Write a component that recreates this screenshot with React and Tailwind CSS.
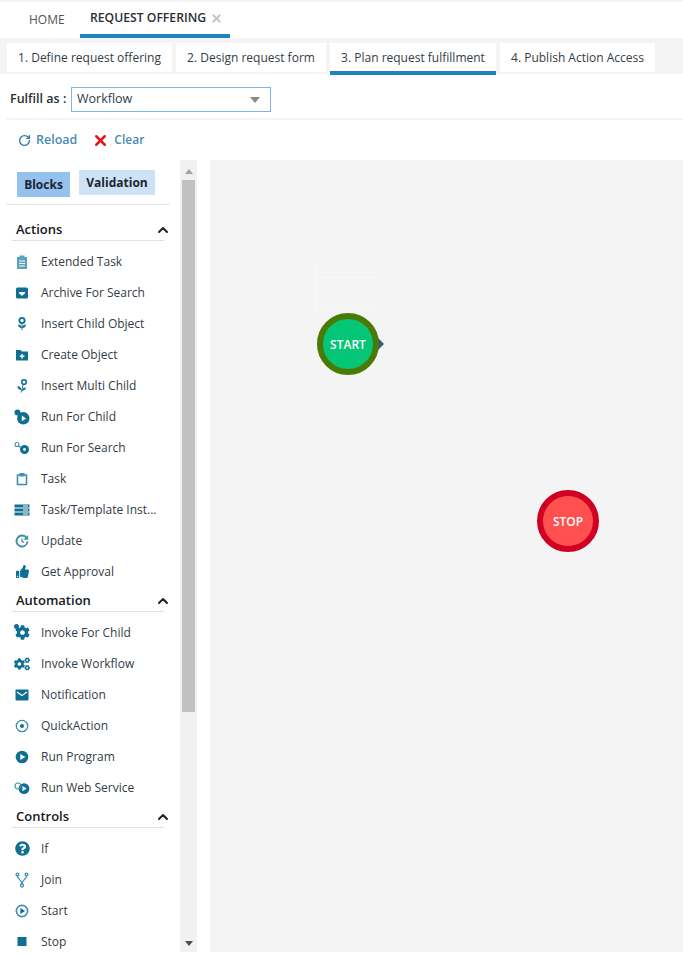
import { FaCog, FaCogs, FaQuestionCircle, FaThumbsUp } from 'react-icons/fa'
import { ChevronUp, RotateCw, X } from 'lucide-react'

const TEAL = '#0f6f92'
const SOFT = '#3f8fab'

function Svg({ children }) {
  return <svg width="16" height="16" viewBox="0 0 16 16" fill={TEAL}>{children}</svg>
}

const ExtendedTaskIcon = () => (
  <Svg>
    <path fill="#5aa3bb" d="M3 3h2.500V1.500h5V3H13v12H3z" />
    <path fill="#fff" d="M5 6.500h6v1H5zM5 9h6v1H5zM5 11.500h6v1H5z" />
  </Svg>
)
const ArchiveIcon = () => (
  <Svg>
    <rect x="2" y="2.500" width="12" height="11" rx="1.500" />
    <path fill="#fff" d="M5 7h6v1.200L8.600 10.500H7.400L5 8.200z" />
  </Svg>
)
const ChildIcon = () => (
  <Svg>
    <path fill="none" stroke={SOFT} strokeWidth="1.200" d="M8 7.500v6.500" />
    <path d="M4 8.500c1.800 0 3.600 1 4 3.500-2.300.2-3.800-1.200-4-3.500zM12 8.500c-1.800 0-3.600 1-4 3.500 2.300.2 3.800-1.200 4-3.500z" />
    <circle cx="8" cy="4.500" r="2.600" fill="none" stroke={TEAL} strokeWidth="1.800" />
  </Svg>
)
const FolderPlusIcon = () => (
  <Svg>
    <path d="M2 3h4.500L8 4.500h6v9H2z" />
    <path fill="#fff" d="M7.400 7h1.400v1.600h1.600V10H8.800v1.600H7.400V10H5.800V8.600h1.600z" />
  </Svg>
)
const MultiChildIcon = () => (
  <Svg>
    <path fill="none" stroke={SOFT} strokeWidth="1.200" d="M9 7l-1.800 7.500" />
    <path d="M3.500 8c1.900.2 3.500 1.400 3.800 4C5 12 3.600 10.500 3.500 8zM12 9.500c-.5 2.300-2.200 3.400-4.300 3.300.4-2.100 2.100-3.300 4.300-3.300z" />
    <circle cx="10" cy="4" r="2.300" fill="none" stroke={TEAL} strokeWidth="1.600" />
  </Svg>
)
const RunChildIcon = () => (
  <Svg>
    <circle cx="9.300" cy="9.300" r="6.200" />
    <circle cx="3.500" cy="3.500" r="3" />
    <path fill="#fff" d="M7.800 6.500l4.200 2.900-4.200 2.900z" />
  </Svg>
)
const RunSearchIcon = () => (
  <Svg>
    <circle cx="3" cy="4.500" r="2" fill="none" stroke={SOFT} strokeWidth="1.100" />
    <path stroke={SOFT} strokeWidth="1.100" d="M4.500 6l2 1.500" />
    <circle cx="10.500" cy="9.500" r="4.500" />
    <circle cx="10.500" cy="9.500" r="1.400" fill="#fff" />
  </Svg>
)
const TaskIcon = () => (
  <Svg>
    <path fill="none" stroke={SOFT} strokeWidth="1.600" d="M3.500 4h9v9.500h-9z" />
    <path fill={SOFT} d="M5.500 2h5v3.500h-5z" />
  </Svg>
)
const BarsIcon = () => (
  <Svg>
    <path d="M.5 2.500h15v3H.5zM.5 6.500h15v3H.5zM.5 10.500h15v3H.5z" />
    <path fill="#fff" d="M9 3.500h5v1H9zM9 7.500h5v1H9zM9 11.500h5v1H9z" />
  </Svg>
)
const UpdateIcon = () => (
  <Svg>
    <path fill="none" stroke={SOFT} strokeWidth="1.900" d="M12.600 5A5.500 5.500 0 1 0 13.500 8.500" />
    <path fill={SOFT} d="M14.200 2v4.800H9.400z" />
    <path fill="none" stroke={SOFT} strokeWidth="1.200" d="M8 5.500v3l2.200 1" />
  </Svg>
)
const MailIcon = () => (
  <Svg>
    <rect x="1.500" y="2.500" width="13" height="11" rx="1" />
    <path fill="none" stroke="#fff" strokeWidth="1.200" d="M3 5l5 3.500L13 5" />
  </Svg>
)
const QuickActionIcon = () => (
  <Svg>
    <circle cx="8" cy="8" r="5.700" fill="none" stroke={SOFT} strokeWidth="1.300" />
    <circle cx="8" cy="8" r="2" />
  </Svg>
)
const RunProgramIcon = () => (
  <Svg>
    <circle cx="8" cy="8" r="6.300" />
    <path fill="#fff" d="M6.300 5l5 3-5 3z" />
  </Svg>
)
const WebServiceIcon = () => (
  <Svg>
    <circle cx="10" cy="8.600" r="5.400" />
    <circle cx="4" cy="6" r="3" fill="none" stroke={SOFT} strokeWidth="1.200" />
    <path fill="#fff" d="M8.500 6l4 2.600-4 2.600z" />
  </Svg>
)
const JoinIcon = () => (
  <Svg>
    <g fill="none" stroke={SOFT} strokeWidth="1.300">
      <circle cx="3.500" cy="2.500" r="1.400" />
      <circle cx="12.500" cy="2.500" r="1.400" />
      <circle cx="8" cy="13.500" r="1.500" />
      <path d="M3.500 4c0 3 4.500 4 4.500 8M12.500 4c0 3-4.500 4-4.500 8" />
    </g>
  </Svg>
)
const StartIcon = () => (
  <Svg>
    <circle cx="8" cy="8" r="5.600" fill="none" stroke={SOFT} strokeWidth="1.600" />
    <path d="M6.300 5l4.800 3-4.800 3z" />
  </Svg>
)
const StopIcon = () => (
  <Svg>
    <rect x="3.500" y="3" width="9" height="9" />
  </Svg>
)
const GearIcon = () => (
  <span className="relative flex">
    <FaCog size={15} color={TEAL} />
    <span className="absolute -left-[1px] -top-[1px] h-[5px] w-[5px] rounded-full bg-[#0f6f92]" />
  </span>
)
const GearsIcon = () => <FaCogs size={16} color={TEAL} />
const HelpIcon = () => <FaQuestionCircle size={15} color={TEAL} />
const ThumbIcon = () => <FaThumbsUp size={13} color={TEAL} />

const sections = [
  {
    title: 'Actions',
    items: [
      ['Extended Task', ExtendedTaskIcon],
      ['Archive For Search', ArchiveIcon],
      ['Insert Child Object', ChildIcon],
      ['Create Object', FolderPlusIcon],
      ['Insert Multi Child', MultiChildIcon],
      ['Run For Child', RunChildIcon],
      ['Run For Search', RunSearchIcon],
      ['Task', TaskIcon],
      ['Task/Template Inst...', BarsIcon],
      ['Update', UpdateIcon],
      ['Get Approval', ThumbIcon],
    ],
  },
  {
    title: 'Automation',
    items: [
      ['Invoke For Child', GearIcon],
      ['Invoke Workflow', GearsIcon],
      ['Notification', MailIcon],
      ['QuickAction', QuickActionIcon],
      ['Run Program', RunProgramIcon],
      ['Run Web Service', WebServiceIcon],
    ],
  },
  {
    title: 'Controls',
    items: [
      ['If', HelpIcon],
      ['Join', JoinIcon],
      ['Start', StartIcon],
      ['Stop', StopIcon],
    ],
  },
]

const steps = [
  ['1. Define request offering', 'w-[165px]'],
  ['2. Design request form', 'w-[150px]'],
  ['3. Plan request fulfillment', 'w-[166px]'],
  ['4. Publish Action Access', 'w-[155px]'],
]

export default function App() {
  return (
    <div className="h-[956px] w-[683px] overflow-hidden bg-white font-['Open_Sans',sans-serif] text-[12px] text-[#333c46]">
      {/* Top tabs */}
      <div className="flex h-[38px] border-t-2 border-[#f4f4f4] bg-white">
        <div className="flex w-[80px] items-center pb-[1px] pl-[29px] text-[#555]">HOME</div>
        <div className="flex w-[150px] items-center gap-[4px] border-b-4 border-[#2084bc] pl-[10px] pt-[1px] text-[12.2px] font-semibold text-[#2a2f36]">
          REQUEST OFFERING
          <X size={13} strokeWidth={3.5} className="text-[#c4c4c4]" />
        </div>
      </div>

      {/* Steps */}
      <div className="flex h-[36px] gap-[4px] bg-[#f4f4f4] pl-[7px] pt-[5px]">
        {steps.map(([label, width], i) => (
          <div
            key={label}
            className={`flex ${width} items-start justify-center bg-white pt-[6px] ${i === 2 ? 'h-[32px] border-b-4 border-[#2084bc]' : 'h-[29px]'}`}
          >
            {label}
          </div>
        ))}
      </div>

      {/* Fulfill as */}
      <div className="flex h-[44px] items-center pl-[10px] pt-[6px]">
        <span className="w-[61px] text-[12.5px] font-semibold text-[#2a2f36]">Fulfill as :</span>
        <div className="flex h-[25px] w-[200px] items-center justify-between border border-[#7db4ea] pl-[5px] pr-[10px] pt-[1px] text-[12.5px]">
          Workflow
          <span className="h-0 w-0 border-x-[5px] border-t-[6px] border-x-transparent border-t-[#8a8a8a]" />
        </div>
      </div>

      {/* Toolbar */}
      <div className="ml-[6px] flex h-[42px] items-center gap-[15px] border-t-2 border-[#f4f4f4] pl-[12px] text-[12.5px] font-semibold text-[#4a8bb3]">
        <span className="flex items-center gap-[5px]">
          <RotateCw size={13} strokeWidth={2.5} className="text-[#2f7ea6]" />
          Reload
        </span>
        <span className="flex items-center gap-[5px] text-[12px]">
          <X size={17} strokeWidth={3.5} className="text-[#e3141c]" />
          Clear
        </span>
      </div>

      {/* Body */}
      <div className="flex h-[792px] pl-[6px]">
        <aside className="w-[174px] overflow-hidden">
          <div className="relative mr-[10px] h-[45px] border-b border-[#e6e6e6]">
            <span className="absolute left-[11px] top-[12px] flex h-[25px] w-[53px] items-center justify-center bg-[#94c1ee] font-bold text-[#1b2530]">Blocks</span>
            <span className="absolute left-[73px] top-[10px] flex h-[25px] w-[76px] items-center justify-center bg-[#cfe2f5] font-bold text-[#1b2530]">Validation</span>
          </div>
          <div className="pt-[11px]">
            {sections.map((section) => (
              <section key={section.title}>
                <div className="mb-[5px] ml-[6px] mr-[16px] flex h-[25px] items-center justify-between border-b border-[#e2e2e2] pl-[4px] pt-[3px] text-[13px] font-semibold text-[#14181d]">
                  {section.title}
                  <ChevronUp size={16} strokeWidth={3} className="-mr-[7px] mt-[1px] text-[#222]" />
                </div>
                {section.items.map(([label, Icon]) => (
                  <div key={label} className="flex h-[31px] items-center">
                    <span className="flex w-[35px] justify-center pr-[3px]"><Icon /></span>
                    {label}
                  </div>
                ))}
              </section>
            ))}
          </div>
        </aside>

        {/* Scrollbar */}
        <div className="flex h-[792px] w-[17px] flex-col items-center bg-[#f1f1f1]">
          <span className="mt-[9px] h-0 w-0 border-x-[4px] border-b-[5px] border-x-transparent border-b-[#a3a3a3]" />
          <span className="mt-[6px] h-[532px] w-[13px] bg-[#c1c1c1]" />
          <span className="mb-[6px] mt-auto h-0 w-0 border-x-[4px] border-t-[5px] border-x-transparent border-t-[#505050]" />
        </div>

        {/* Canvas */}
        <div className="relative ml-[13px] flex-1 bg-[#f4f4f4]">
          <div className="absolute left-[105px] top-[103px] h-[47px] border-l border-dotted border-[#fbfbfb]" />
          <div className="absolute left-[105px] top-[117px] h-[32px] w-[60px] border-y border-dotted border-[#fdfdf0]" />
          <div className="absolute left-[168px] top-[178px] h-0 w-0 border-y-[6px] border-l-[6px] border-y-transparent border-l-[#33597d]" />
          <div className="absolute left-[107px] top-[153px] flex h-[62px] w-[62px] items-center justify-center rounded-full border-[6px] border-[#4a7a06] bg-[#05c576] pt-[1px] font-semibold text-white">
            START
          </div>
          <div className="absolute left-[327px] top-[330px] flex h-[62px] w-[62px] items-center justify-center rounded-full border-[6px] border-[#cf0022] bg-[#ff5050] pt-[1px] font-semibold text-white">
            STOP
          </div>
        </div>
      </div>
    </div>
  )
}
